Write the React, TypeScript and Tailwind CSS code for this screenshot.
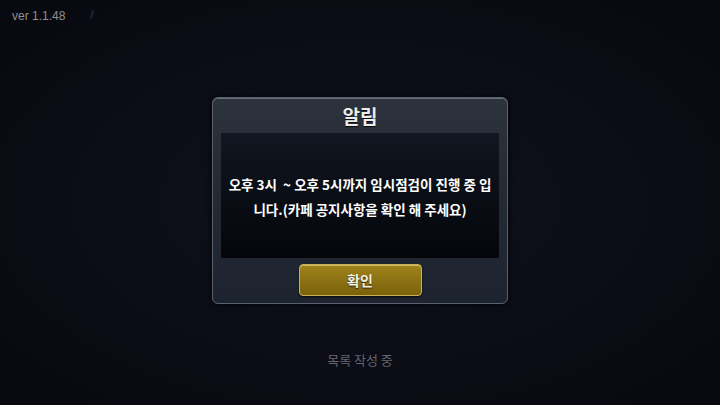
import React from "react";

const KR = { fontFamily: '"Noto Sans CJK KR", "Noto Sans", sans-serif' };

export default function App() {
  return (
    <div
      className="w-[720px] h-[405px] overflow-hidden flex flex-col bg-[radial-gradient(ellipse_at_center,#10121d_0%,#0a0b13_70%,#08090f_100%)]"
      style={KR}
    >
      <div className="h-[30px] pl-[12px] pt-[8px] flex items-start gap-[26px]">
        <span className="text-[12px] leading-[16px] text-[#8e8e92]" style={{ fontFamily: '"Liberation Sans", Arial, sans-serif' }}>
          ver 1.1.48
        </span>
        <span className="mt-[2px] w-[2px] h-[9px] rounded-full bg-[#1c2438] rotate-[20deg]" />
      </div>

      <div className="mt-[67px] mx-auto w-[296px] h-[207px] rounded-[6px] border border-[#59616c] bg-[linear-gradient(180deg,#2c333c_0%,#242b34_40%,#1d2430_100%)] shadow-[0_0_6px_rgba(0,0,0,0.9),inset_0_1px_0_rgba(170,180,195,0.45)] flex flex-col">
        <div className="h-[35px] flex items-center justify-center">
          <span className="text-[19px] font-bold text-[#ececec] leading-none [text-shadow:0_1px_1px_rgba(0,0,0,0.8)]">알림</span>
        </div>
        <div className="mx-[8px] h-[125px] bg-[linear-gradient(180deg,#111620_0%,#0a0e15_50%,#04060a_100%)] flex items-center justify-center">
          <p className="text-[13.5px] font-bold text-white leading-[25px] text-center mt-[2px]">
            오후 3시&nbsp; ~ 오후 5시까지 임시점검이 진행 중 입<br />니다.(카페 공지사항을 확인 해 주세요)
          </p>
        </div>
        <div className="flex-1 flex items-start justify-center pt-[6px]">
          <div className="w-[123px] h-[32px] rounded-[4px] border border-[#c9b15a] bg-[linear-gradient(180deg,#a0841a_0%,#8c7212_50%,#7a620b_100%)] shadow-[inset_0_1px_0_rgba(255,240,170,0.5),0_1px_2px_rgba(0,0,0,0.8)] flex items-center justify-center">
            <span className="text-[14px] font-bold text-[#f4f0e4] leading-none [text-shadow:0_1px_1px_rgba(0,0,0,0.7)]">확인</span>
          </div>
        </div>
      </div>

      <div className="mt-[42px] text-center">
        <span className="text-[13px] text-[#66666c] leading-[18px]">목록 작성 중</span>
      </div>
    </div>
  );
}
